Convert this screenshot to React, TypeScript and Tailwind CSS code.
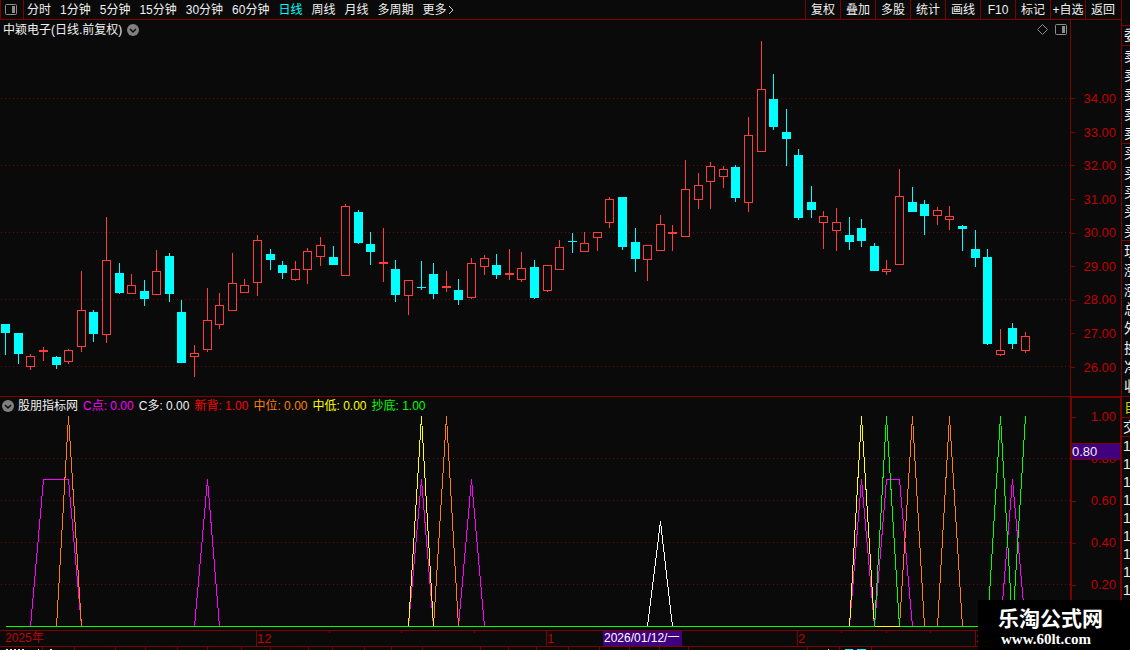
import React from 'react';

type Candle = [x: number, high: number, top: number, bottom: number, low: number, up: 0 | 1];

// x, high, body top, body bottom, low, 1 = rising (hollow red) / 0 = falling (solid cyan)
const candles: Candle[] = [
  [5, 324, 324, 333, 355, 0], [18, 333, 333, 354, 364, 0], [30, 354, 356, 367, 370, 1],
  [43, 347, 350, 352, 361, 1], [56, 356, 357, 365, 369, 0], [68, 349, 350, 362, 364, 1],
  [81, 271, 310, 347, 352, 1], [93, 310, 312, 334, 342, 0], [106, 217, 260, 335, 343, 1],
  [119, 263, 273, 293, 294, 0], [131, 274, 285, 294, 294, 1], [144, 280, 291, 299, 306, 0],
  [156, 250, 271, 295, 295, 1], [169, 253, 256, 294, 302, 0], [181, 300, 312, 363, 363, 0],
  [194, 345, 353, 357, 377, 1], [207, 288, 320, 350, 352, 1], [219, 293, 305, 325, 329, 1],
  [232, 253, 283, 311, 311, 1], [244, 279, 285, 293, 293, 1], [257, 235, 240, 283, 296, 1],
  [270, 249, 254, 260, 270, 0], [282, 261, 265, 273, 279, 0], [295, 261, 269, 280, 281, 1],
  [307, 248, 251, 270, 284, 1], [320, 237, 245, 257, 266, 1], [333, 246, 257, 265, 265, 0],
  [345, 204, 206, 276, 276, 1], [358, 210, 212, 243, 244, 0], [370, 232, 244, 252, 265, 0],
  [383, 228, 262, 264, 282, 1], [395, 260, 269, 295, 302, 0], [408, 280, 280, 296, 315, 1],
  [421, 261, 287, 288, 290, 0], [433, 263, 274, 294, 299, 0], [446, 271, 286, 288, 292, 1],
  [458, 279, 290, 300, 305, 0], [471, 258, 263, 298, 299, 1], [484, 255, 258, 267, 275, 1],
  [496, 254, 265, 275, 279, 0], [509, 249, 273, 275, 280, 1], [521, 252, 268, 280, 282, 1],
  [534, 260, 267, 298, 299, 0], [547, 265, 265, 291, 292, 1], [559, 240, 247, 270, 270, 1],
  [572, 233, 241, 242, 253, 0], [584, 232, 243, 252, 252, 1], [597, 232, 232, 238, 251, 1],
  [609, 197, 199, 223, 228, 1], [622, 197, 197, 247, 250, 0], [635, 228, 242, 259, 272, 0],
  [647, 245, 245, 260, 281, 1], [660, 215, 224, 251, 251, 1], [672, 225, 232, 234, 251, 1],
  [685, 160, 189, 237, 237, 1], [698, 173, 185, 200, 209, 1], [710, 162, 166, 182, 209, 1],
  [723, 166, 169, 177, 188, 1], [735, 165, 167, 198, 202, 0], [748, 117, 135, 203, 212, 1],
  [761, 41, 89, 152, 152, 1], [773, 74, 99, 127, 130, 0], [786, 109, 132, 139, 166, 0],
  [798, 149, 155, 218, 220, 0], [811, 186, 202, 210, 218, 0], [823, 211, 216, 223, 249, 1],
  [836, 208, 222, 231, 251, 1], [849, 217, 235, 242, 250, 0], [861, 219, 228, 241, 247, 0],
  [874, 243, 246, 271, 271, 0], [886, 260, 269, 272, 275, 1], [899, 169, 196, 265, 265, 1],
  [912, 187, 202, 212, 212, 0], [924, 200, 204, 216, 235, 0], [937, 207, 210, 216, 225, 1],
  [949, 206, 216, 220, 230, 1], [962, 225, 226, 229, 251, 0], [975, 230, 249, 258, 267, 0],
  [987, 249, 257, 344, 345, 0], [1000, 329, 350, 355, 356, 1], [1012, 323, 328, 344, 349, 0],
  [1025, 332, 336, 351, 353, 1],
];

const periods = ['分时', '1分钟', '5分钟', '15分钟', '30分钟', '60分钟', '日线', '周线', '月线', '多周期', '更多'];
const tools = ['复权', '叠加', '多股', '统计', '画线', 'F10', '标记', '+自选', '返回'];
const prices = ['34.00', '33.00', '32.00', '31.00', '30.00', '29.00', '28.00', '27.00', '26.00'];
const levels = ['1.00', '0.80', '0.60', '0.40', '0.20'];

const indicators = [
  { label: 'C点: 0.00', color: 'text-[#ff00ff]' },
  { label: 'C多: 0.00', color: 'text-[#f0f0f0]' },
  { label: '新背: 1.00', color: 'text-[#ff0000]' },
  { label: '中位: 0.00', color: 'text-[#ff8000]' },
  { label: '中低: 0.00', color: 'text-[#ffff00]' },
  { label: '抄底: 1.00', color: 'text-[#00ff00]' },
];

const signals = [
  {
    color: '#ff00ff',
    points:
      '5,626 30,626 43,479 68,479 81,626 194,626 207,479 219,626 408,626 421,479 433,626 458,626 471,479 484,626 849,626 861,479 874,626 886,479 899,479 912,626 1000,626 1012,479 1025,626',
  },
  { color: '#ffffff', points: '5,626 647,626 660,521 672,626 1025,626' },
  {
    color: '#ff8000',
    points:
      '5,626 56,626 68,416 81,626 433,626 446,416 458,626 899,626 912,416 924,626 937,626 949,416 962,626 1025,626',
  },
  { color: '#ffff00', points: '5,626 408,626 421,416 433,626 849,626 861,416 874,626 1025,626' },
  { color: '#00ff00', points: '5,626 874,626 886,416 899,626 987,626 1000,416 1012,626 1025,416' },
];

const quoteRows = ['卖', '卖', '卖', '卖', '卖', '买', '买', '买', '买', '买', '现', '涨', '涨', '总', '外', '换', '净', '收'];

const ChevronBadge: React.FC = () => (
  <svg className="h-3 w-3 shrink-0" viewBox="0 0 12 12" aria-hidden="true">
    <circle cx="6" cy="6" r="6" fill="#808080" />
    <path d="M3 5l3 3 3-3" fill="none" stroke="#0a0a0a" strokeWidth="1.5" />
  </svg>
);

const PanelIcon: React.FC = () => (
  <svg className="h-[11px] w-3 shrink-0" viewBox="0 0 12 11" aria-hidden="true">
    <rect x="0.5" y="0.5" width="11" height="10" rx="1" fill="none" stroke="#8c8c8c" />
    <rect x="7" y="2" width="3" height="7" fill="#8c8c8c" />
  </svg>
);

const TopBar: React.FC = () => (
  <header className="flex h-5 items-stretch border-b border-[#800000]">
    <button type="button" aria-label="侧栏" className="flex w-6 items-center border-x border-[#800000] pl-1">
      <PanelIcon />
    </button>
    <nav className="flex items-center gap-[9px] pl-[3px]">
      {periods.map((name) => (
        <button key={name} type="button" className={name === '日线' ? 'text-[#00ffff]' : ''}>
          {name}
        </button>
      ))}
      <svg className="-ml-2 h-[10px] w-[6px]" viewBox="0 0 6 10" aria-hidden="true">
        <path d="M1 1l4 4-4 4" fill="none" stroke="#d0d0d0" />
      </svg>
    </nav>
    <div className="ml-auto flex pr-px">
      {tools.map((name) => (
        <button key={name} type="button" className="w-[35px] border-l border-[#800000] whitespace-nowrap">
          {name}
        </button>
      ))}
    </div>
  </header>
);

const CandleChart: React.FC = () => (
  <svg
    className="block h-[357px] w-full"
    viewBox="0 39 1070 357"
    preserveAspectRatio="none"
    shapeRendering="crispEdges"
    role="img"
    aria-label="日线"
  >
    {[98, 165, 232, 299, 366].map((y) => (
      <path key={y} d={`M1 ${y + 0.5}H1070`} stroke="#6a0c0c" strokeDasharray="1 3" />
    ))}
    {candles.map(([x, high, top, bottom, low, up]) =>
      up ? (
        <g key={x} fill="#ff3c3c">
          <rect x={x} y={high} width="1" height={top - high} />
          <rect x={x} y={bottom} width="1" height={low - bottom} />
          {bottom - top > 2 ? (
            <rect x={x - 3.5} y={top + 0.5} width="8" height={bottom - top - 1} fill="#0a0a0a" stroke="#ff3c3c" />
          ) : (
            <rect x={x - 4} y={top} width="9" height={bottom - top} />
          )}
        </g>
      ) : (
        <g key={x} fill="#00ffff">
          <rect x={x} y={high} width="1" height={low - high} />
          <rect x={x - 4} y={top} width="9" height={bottom - top} />
        </g>
      ),
    )}
  </svg>
);

const SignalChart: React.FC = () => (
  <svg
    className="block h-[216px] w-full"
    viewBox="0 414 1070 216"
    preserveAspectRatio="none"
    shapeRendering="crispEdges"
    role="img"
    aria-label="股朋指标网"
  >
    {[458, 500, 542, 584].map((y) => (
      <path key={y} d={`M1 ${y + 0.5}H1070`} stroke="#6a0c0c" strokeDasharray="1 3" />
    ))}
    <g transform="translate(0.5 0.5)" fill="none">
      {signals.map((s) => (
        <polyline key={s.color} points={s.points} stroke={s.color} />
      ))}
      <path d="M874 626H899" stroke="#ffff00" />
    </g>
  </svg>
);

const TimeAxis: React.FC = () => (
  <div className="relative h-[17px] border-y border-[#800000] text-[13px] leading-[15px] text-[#c00000]">
    <div className="flex">
      <span className="w-[256px] pl-[5px] text-xs leading-[15px]">2025年</span>
      <span className="w-[290px] border-l border-[#800000]">12</span>
      <span className="w-[251px] border-l border-[#800000]">1</span>
      <span className="w-[178px] border-l border-[#800000]">2</span>
      <span className="border-l border-[#800000]">3</span>
    </div>
    <svg className="absolute top-0 left-0 h-[2px] w-full" aria-hidden="true">
      <path d="M329.5 0v2M401.5 0v2M474.5 0v2M841.5 0v2M886.5 0v2M930.5 0v2" stroke="#800000" />
    </svg>
    <span className="absolute top-0 left-[603px] h-[15px] w-[79px] bg-[#400080] pl-px text-xs leading-[15px] whitespace-nowrap text-white">
      2026/01/12/一
    </span>
  </div>
);

const QuoteStrip: React.FC = () => (
  <aside className="w-[9px] shrink-0 overflow-hidden border-l border-[#800000] pt-[25px] text-sm text-[#f0f0f0]">
    <div className="w-5 border-y border-[#800000] pl-[2px] leading-[19px]">委</div>
    <div className="flex h-[350px] w-5 flex-col leading-[18px]">
      {quoteRows.map((name, i) => (
        <div
          key={i}
          className={`flex flex-1 items-center pl-[2px] ${i === 4 || i === 9 ? 'border-b border-[#800000]' : ''}`}
        >
          {name}
        </div>
      ))}
    </div>
    <div className="w-5 border-y border-[#800000] pl-[2px] leading-[20px] text-[#d0d000]">自</div>
    <div className="w-5 border-b border-[#800000] pl-px leading-[18px]">交</div>
    {[0, 1, 2, 3, 4, 5, 6, 7, 8].map((n) => (
      <div key={n} className="h-[18px] w-5 pl-px leading-[18px]">
        1
      </div>
    ))}
  </aside>
);

const App: React.FC = () => {
  return (
    <div className="relative flex h-screen min-h-[650px] overflow-hidden bg-[#0a0a0a] font-['Liberation_Sans','Noto_Sans_CJK_SC',sans-serif] text-xs text-[#f0f0f0]">
      <div className="min-w-0 flex-1">
        <TopBar />

        {/* Price chart */}
        <section className="flex">
          <div className="min-w-0 flex-1">
            <div className="flex h-[19px] items-center justify-between px-[3px]">
              <div className="flex items-center gap-[5px]">
                <h1>中颖电子(日线.前复权)</h1>
                <ChevronBadge />
              </div>
              <div className="flex items-center gap-[7px]">
                <svg className="h-[11px] w-[11px]" viewBox="0 0 11 11" aria-hidden="true">
                  <path d="M5.5 0.5l5 5-5 5-5-5z" fill="none" stroke="#8c8c8c" />
                </svg>
                <PanelIcon />
              </div>
            </div>
            <CandleChart />
          </div>
          <div className="w-[51px] border-l border-[#800000] pt-[62px] text-[13px] text-[#c00000]">
            <div className="flex h-[302px] flex-col">
              {prices.map((p) => (
                <div key={p} className="flex flex-1 items-center justify-between pr-[5px]">
                  <span className="h-px w-1 bg-[#800000]" />
                  {p}
                </div>
              ))}
            </div>
          </div>
        </section>

        {/* Indicator chart */}
        <section className="flex border-t border-[#800000]">
          <div className="min-w-0 flex-1">
            <div className="flex h-[17px] items-center gap-[5px] pl-[2px] whitespace-nowrap">
              <ChevronBadge />
              <h2 className="-ml-px">股朋指标网</h2>
              {indicators.map((item) => (
                <span key={item.label} className={item.color}>
                  {item.label}
                </span>
              ))}
            </div>
            <SignalChart />
          </div>
          <div className="relative w-[51px] border-t border-r border-l-2 border-[#800000] text-[13px] text-[#c00000]">
            <div className="-mt-[2px] flex h-[210px] flex-col">
              {levels.map((v) => (
                <div key={v} className="flex flex-1 items-center justify-between pr-[4px]">
                  <span className="h-px w-1 bg-[#800000]" />
                  {v}
                </div>
              ))}
            </div>
            <div className="absolute top-[45px] left-0 h-[17px] w-full border-y border-[#800000] bg-[#400080] leading-[15px] text-[#f0f0f0]">
              0.80
            </div>
          </div>
        </section>

        <TimeAxis />
        <svg className="block h-[3px] w-full" aria-hidden="true">
          <path
            d="M42.5 0v3M74.5 0v3M115.5 0v3M145.5 0v3M177.5 0v3M207.5 0v3M241.5 0v3M270.5 0v3M308.5 0v3M332.5 0v3M364.5 0v3M391.5 0v3M422.5 0v3M480.5 0v3M508.5 0v3M536.5 0v3M568.5 0v3M599.5 0v3M629.5 0v3M659.5 0v3M688.5 0v3M807.5 0v3M839.5 0v3M871.5 0v3"
            stroke="#800000"
          />
          <path d="M6 2.5h2M10 2.5h2M14 2.5h2M18 2.5h2M22 2.5h2M38 2.5h1M50 2.5h2M828 2.5h1" stroke="#f0f0f0" />
          <path d="M845 2.5h8M857 2.5h9" stroke="#00ffff" />
        </svg>
      </div>

      <QuoteStrip />

      {/* Site badge */}
      <div className="absolute right-0 bottom-0 flex h-[50px] w-[152px] flex-col bg-black pt-[7px] pl-5 font-bold text-white">
        <span className="text-[21px] leading-[24px] whitespace-nowrap">乐淘公式网</span>
        <a href="#" className="pl-[3px] font-['Liberation_Serif',serif] text-[15px] leading-[16px]">
          www.60lt.com
        </a>
      </div>
    </div>
  );
};

export default App;
